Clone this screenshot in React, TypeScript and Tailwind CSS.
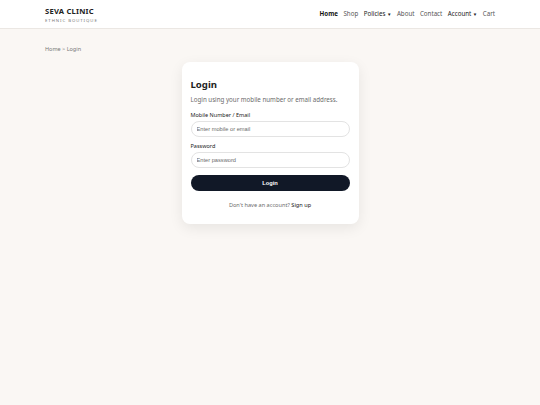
import React from "react";

export default function App() {
  const nav = [
    { t: "Home", b: true },
    { t: "Shop" },
    { t: "Policies", d: true },
    { t: "About" },
    { t: "Contact" },
    { t: "Account", d: true },
    { t: "Cart" },
  ];
  return (
    <div className="min-h-[405px] bg-[#faf7f4] text-[#1f2937]" style={{ fontFamily: '"Noto Sans", sans-serif' }}>
      <header className="h-[29px] bg-white border-b border-[#ebe7e3]">
        <div className="mx-[45px] h-full flex items-center justify-between">
          <div className="flex flex-col pt-[1px]">
            <span className="text-[7.6px] font-bold leading-[9px] tracking-[0.03em] text-[#222222]">SEVA CLINIC</span>
            <span className="text-[4.3px] leading-[6px] tracking-[0.22em] text-[#777777] mt-[1px]">ETHNIC BOUTIQUE</span>
          </div>
          <nav className="flex items-center gap-[5.5px] text-[6.2px] text-[#555555]">
            {nav.map((n) => (
              <span key={n.t} className={`flex items-center ${n.b ? "font-bold text-[#111111]" : ""} ${n.d ? "text-[#222222]" : ""}`}>
                {n.t}
                {n.d && <span className="text-[4.5px] ml-[1.5px]">▼</span>}
              </span>
            ))}
          </nav>
        </div>
      </header>
      <div className="mx-[45px] pt-[16px] text-[5.5px] leading-[8px] text-[#777777]">Home &gt; Login</div>
      <div className="flex justify-center pt-[9px]">
        <div className="w-[177px] bg-white rounded-[8px] shadow-[0_4px_14px_rgba(0,0,0,0.08)] px-[9px] pt-[17px] pb-[15px]">
          <h1 className="text-[9.6px] font-bold leading-[12px] text-[#222222]">Login</h1>
          <p className="text-[6.2px] leading-[8px] text-[#6b6b6b] mt-[5px] whitespace-nowrap">Login using your mobile number or email address.</p>
          <label className="block text-[5.5px] leading-[8px] text-[#222222] mt-[7px]">Mobile Number / Email</label>
          <input
            className="block mt-[2px] w-full h-[16px] rounded-full border border-[#e3e3e3] px-[5px] text-[5.7px] outline-none placeholder:text-[#6b6b6b]"
            style={{ fontFamily: '"Liberation Sans", Arial, sans-serif' }}
            placeholder="Enter mobile or email"
          />
          <label className="block text-[5.5px] leading-[8px] text-[#222222] mt-[5px]">Password</label>
          <input
            type="password"
            className="block mt-[2px] w-full h-[16px] rounded-full border border-[#e3e3e3] px-[5px] text-[5.7px] outline-none placeholder:text-[#6b6b6b]"
            style={{ fontFamily: '"Liberation Sans", Arial, sans-serif' }}
            placeholder="Enter password"
          />
          <button
            className="block mt-[7px] w-full h-[16px] rounded-full bg-[#111827] text-white text-[5.7px] font-bold"
            style={{ fontFamily: '"Liberation Sans", Arial, sans-serif' }}
          >
            Login
          </button>
          <p className="text-center text-[5.6px] leading-[8px] text-[#6b6b6b] mt-[10px]">
            Don't have an account? <span className="text-[#111111]">Sign up</span>
          </p>
        </div>
      </div>
    </div>
  );
}
